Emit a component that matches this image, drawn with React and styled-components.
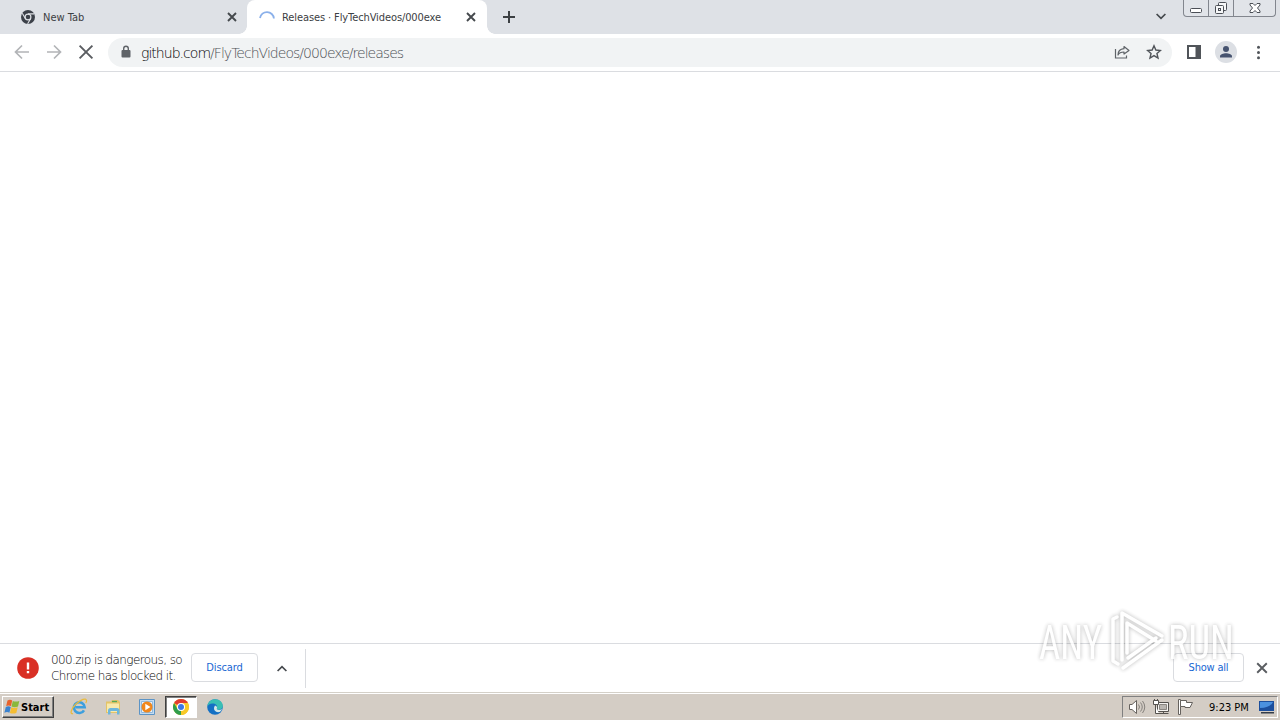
import React from "react";
import styled, { createGlobalStyle, css } from "styled-components";

const GlobalStyle = createGlobalStyle`
  * {
    box-sizing: border-box;
  }

  body {
    margin: 0;
    overflow: hidden;
    background: #fff;
    font-family: "DejaVu Sans Condensed", "DejaVu Sans", "Liberation Sans", sans-serif;
    font-stretch: condensed;
  }

  svg {
    display: block;
    flex: none;
  }
`;

const Screen = styled.div`
  position: relative;
  display: flex;
  flex-direction: column;
  width: 1280px;
  height: 720px;
  overflow: hidden;
`;

const Label = styled.span`
  white-space: pre;
  font-size: ${props => props.size || 11}px;
  letter-spacing: ${props => props.spacing || 0}px;
  color: ${props => props.color || "#3c4043"};
`;

/* the thin face of the address bar and the download notice */
const ThinLabel = styled(Label)`
  font-family: "DejaVu Sans Light", "DejaVu Sans", sans-serif;
  font-stretch: normal;
  font-weight: 200;
`;

/* Tab strip */

const TabStrip = styled.div`
  display: flex;
  height: 34px;
  background: #dee1e6;
`;

const Tab = styled.div`
  position: relative;
  display: flex;
  align-items: center;
  gap: ${props => props.gap}px;
  width: ${props => props.width}px;
  height: 34px;
  padding: 0 ${props => (props.active ? 11 : 10)}px 0 ${props => props.inset}px;

  ${props =>
    props.active &&
    css`
      background: #fff;
      border-radius: 8px 8px 0 0;

      &::before,
      &::after {
        content: "";
        position: absolute;
        bottom: 0;
        width: 8px;
        height: 8px;
      }

      &::before {
        left: -8px;
        background: radial-gradient(circle at 0 0, transparent 7.5px, #fff 8px);
      }

      &::after {
        right: -8px;
        background: radial-gradient(circle at 100% 0, transparent 7.5px, #fff 8px);
      }
    `}
`;

const TabTitle = styled(Label)`
  flex: 1;
`;

const NewTab = styled.div`
  padding: 11px 0 0 16px;
`;

const StripEnd = styled.div`
  display: flex;
  align-items: flex-start;
  margin-left: auto;
  padding-right: 4px;
`;

const TabSearch = styled.div`
  padding: 13px 17px 0 0;
`;

const Controls = styled.div`
  display: flex;
  width: 93px;
  height: 17px;
  border: 1px solid #82868e;
  border-top: 0;
  border-radius: 0 0 4px 4px;
  background: #e1e4e9;
`;

const Control = styled.div`
  display: flex;
  justify-content: center;
  width: ${props => props.width}px;
  padding-top: ${props => props.top}px;
  border-left: ${props => (props.divided ? "1px solid #82868e" : "0")};
`;

/* Toolbar */

const Toolbar = styled.div`
  display: flex;
  align-items: center;
  height: 38px;
  padding: 0 14px 1px;
  border-bottom: 1px solid #dadce0;
`;

const NavButtons = styled.div`
  display: flex;
  gap: 16px;
`;

const AddressBar = styled.div`
  display: flex;
  align-items: center;
  flex: 1;
  height: 29px;
  margin: 0 15px 0 14px;
  padding: 0 10px 0 12px;
  border-radius: 15px;
  background: #f1f3f4;
`;

const Url = styled(ThinLabel)`
  flex: 1;
  padding: 1px 0 0 9px;
`;

const Host = styled.span`
  color: #000;
`;

const BarIcons = styled.div`
  display: flex;
  gap: 16px;
`;

const ToolIcons = styled.div`
  display: flex;
  align-items: center;
  gap: 14px;
`;

const Page = styled.div`
  flex: 1;
  background: #fff;
`;

/* Download shelf */

const Shelf = styled.div`
  display: flex;
  align-items: center;
  height: 49px;
  padding: 0 12px 0 16px;
  border-top: 1px solid #dadce0;
`;

const Warning = styled.div`
  display: flex;
  flex: none;
  flex-direction: column;
  width: 151px;
  padding-left: 11px;
  line-height: 16px;
`;

const ShelfButton = styled.div`
  display: flex;
  align-items: center;
  justify-content: center;
  width: ${props => props.width}px;
  height: 29px;
  margin-bottom: 1px;
  padding-bottom: 1px;
  border: 1px solid #dadce0;
  border-radius: 4px;
`;

const ShelfChevron = styled.div`
  padding: 0 18px 0 19px;
`;

const Separator = styled.div`
  width: 1px;
  height: 39px;
  background: #dadce0;
`;

const ShelfEnd = styled.div`
  display: flex;
  align-items: center;
  gap: 12px;
  margin-left: auto;
`;

/* Taskbar */

const Taskbar = styled.div`
  display: flex;
  align-items: center;
  height: 28px;
  padding: 1px 2px 0;
  border-top: 1px solid #d4d0c8;
  background: #d4cdc5;
  box-shadow: inset 0 1px #fff;
`;

const StartButton = styled.div`
  display: flex;
  align-items: center;
  gap: 1px;
  width: 52px;
  height: 22px;
  padding-left: 1px;
  border: 1px solid;
  border-color: #fff #404040 #404040 #fff;
  box-shadow: inset -1px -1px #808080;
  font-weight: 700;
`;

const QuickLaunch = styled.div`
  display: flex;
  align-items: center;
  padding-left: 8px;
`;

const TaskItem = styled.div`
  display: flex;
  align-items: center;
  justify-content: center;
  width: ${props => (props.pressed ? 32 : 34)}px;
  height: 22px;
  margin: 0 ${props => (props.pressed ? 1 : 0)}px;

  ${props =>
    props.pressed &&
    css`
      background: #fff;
      border: 1px solid;
      border-color: #404040 #fff #fff #404040;
      box-shadow: inset 1px 1px #808080;
    `}
`;

const Tray = styled.div`
  display: flex;
  align-items: center;
  gap: 7px;
  width: 156px;
  height: 22px;
  margin-left: auto;
  padding-left: 5px;
  border: 1px solid;
  border-color: #808080 #fff #fff #808080;
`;

const Clock = styled(Label)`
  width: 42px;
  margin-left: 8px;
`;

const Watermark = styled.svg`
  position: absolute;
  left: 1032px;
  top: 602px;
  overflow: visible;
  opacity: 0.8;
  filter: drop-shadow(0 0 2px rgba(0, 0, 0, 0.35));
`;

const Cross = ({ size = 10, color = "#45494d", weight = 1.9 }) => (
  <svg width={size} height={size} viewBox="0 0 10 10" stroke={color} strokeWidth={weight}>
    <path d="M1 1l8 8M9 1L1 9" />
  </svg>
);

const Chevron = ({ up }) => (
  <svg width="10" height="7" viewBox="0 0 10 7" fill="none" stroke="#45494d" strokeWidth="1.7">
    <path d={up ? "M.6 6L5 1.6 9.400 6" : "M.6 1L5 5.400 9.400 1"} />
  </svg>
);

const Arrow = ({ flip }) => (
  <svg width="16" height="16" viewBox="0 0 16 16" fill="none" stroke="#b2b4b7" strokeWidth="1.700">
    <path d={flip ? "M1 8h13M8 1.500L14.500 8 8 14.500" : "M15 8H2M8 1.500L1.500 8 8 14.500"} />
  </svg>
);

const GreyChrome = () => (
  <svg width="14" height="14" viewBox="0 0 14 14">
    <circle cx="7" cy="7" r="7" fill="#3c4149" />
    <circle cx="7" cy="7" r="2.900" fill="none" stroke="#dee1e6" strokeWidth="1.200" />
    <path d="M7 3.900h6.200M4.300 8.500L1.300 3.300M9.700 8.500L6.600 13.800" stroke="#dee1e6" strokeWidth="1.100" />
  </svg>
);

const Spinner = () => (
  <svg width="16" height="16" viewBox="0 0 16 16" fill="none" stroke="#8ab0ea" strokeWidth="1.800">
    <path d="M1 9A7 7 0 0 1 14.900 9.500" />
  </svg>
);

const Lock = () => (
  <svg width="12" height="14" viewBox="0 0 12 14">
    <rect x="1.500" y="5" width="9" height="7.500" rx="1" fill="#5f6368" />
    <path d="M3.700 5.500V3.600a2.300 2.300 0 0 1 4.600 0v1.900" fill="none" stroke="#5f6368" strokeWidth="1.400" />
  </svg>
);

const Share = () => (
  <svg width="16" height="16" viewBox="0 0 16 16" fill="none" stroke="#5f6368" strokeWidth="1.200">
    <path d="M1.500 5v9h11v-2.500" />
    <path d="M10 2.500L15 6.500 10 10V8C7 8 5 9 4 11c0-4 2.500-6 6-6.300z" strokeLinejoin="round" />
  </svg>
);

const Star = () => (
  <svg width="16" height="16" viewBox="0 0 16 16" fill="none" stroke="#505459" strokeWidth="1.400">
    <path d="M8 1.800l1.850 4.250 4.600.4-3.500 3.050 1.050 4.500L8 11.600 4 14l1.050-4.500-3.500-3.050 4.600-.4z" />
  </svg>
);

const SidePanel = () => (
  <svg width="14" height="14" viewBox="0 0 14 14">
    <path d="M0 0h14v14H0zM2 2v10h6.500V2z" fill="#505459" fillRule="evenodd" />
  </svg>
);

const Avatar = () => (
  <svg width="22" height="22" viewBox="0 0 22 22">
    <circle cx="11" cy="11" r="11" fill="#dcdfe4" />
    <circle cx="11" cy="8" r="3" fill="#46536f" />
    <path d="M5 16.500v-1.300c0-2 3.500-3 6-3s6 1 6 3v1.300z" fill="#46536f" />
  </svg>
);

const Dots = () => (
  <svg width="15" height="16" viewBox="0 0 15 16" fill="#505459">
    <circle cx="7.500" cy="3.300" r="1.500" />
    <circle cx="7.500" cy="8.500" r="1.500" />
    <circle cx="7.500" cy="13.700" r="1.500" />
  </svg>
);

const Alert = () => (
  <svg width="24" height="24" viewBox="0 0 24 24">
    <circle cx="12" cy="12" r="10.800" fill="#d93025" />
    <path d="M12 6.500v7M12 15v2.300" stroke="#fff" strokeWidth="2.400" />
  </svg>
);

const WindowsFlag = () => (
  <svg width="16" height="16" viewBox="0 0 16 16">
    <path d="M3.500 1.500q2.500-1.400 4.700 0L7 7.100q-2.500-1.300-4.800 0z" fill="#e8622c" />
    <path d="M8.800 1.900q3 1.300 6.500 0L14 7.500q-3.500 1.300-6.500 0z" fill="#8ab83c" />
    <path d="M1.800 8q2.600-1.300 5 0l-1.400 5.700q-2.300-1.300-5 0z" fill="#3a82cf" />
    <path d="M7.300 8.300q3 1.300 6.400 0l-1.400 5.600q-3.500 1.300-6.400 0z" fill="#f5bd32" />
  </svg>
);

const Explorer = () => (
  <svg width="18" height="18" viewBox="0 0 18 18" fill="none">
    <path d="M14 12.300a5.400 5.400 0 1 1 .7-3H5.500" stroke="#3d9fde" strokeWidth="2.600" />
    <path d="M3 15.500C-.5 17 1 10.500 6 6S16-.5 16.500 2.500q.2 1-.7 2.500" stroke="#e9bb3d" strokeWidth="1.300" />
  </svg>
);

const Folder = () => (
  <svg width="18" height="18" viewBox="0 0 18 18">
    <path d="M2 3.500h5l1-1.500h6L16 4v11H2z" fill="#e3c468" />
    <path d="M3 5.500h12v8.500H3z" fill="#f8e9ad" />
    <path d="M8 3.500h5" stroke="#55a85a" strokeWidth="1.300" />
    <path d="M4 16.500v-4q0-2.500 2.500-2.500h6.500q2.500 0 2.500 2.500v4H13V13H6.500v3.500z" fill="#6db6dc" />
  </svg>
);

const MediaPlayer = () => (
  <svg width="16" height="16" viewBox="0 0 16 16">
    <path d="M.5.500h15v15H.5z" fill="#c4dcf1" stroke="#5c94c6" />
    <path d="M2.500 2.500h11v11h-11z" fill="#eaf3fb" stroke="#8fb8dc" />
    <circle cx="8" cy="8" r="5.500" fill="#f0871c" />
    <path d="M6.300 4.700v6.600L11.500 8z" fill="#fff" />
  </svg>
);

const Chrome = () => (
  <svg width="16" height="16" viewBox="0 0 16 16">
    <circle cx="8" cy="8" r="8" fill="#f7c928" />
    <path d="M8 8L1.070 4A8 8 0 0 1 14.930 4z" fill="#e03c31" />
    <path d="M8 8v8A8 8 0 0 1 1.070 4L4.500 10z" fill="#2f9d4c" />
    <path d="M8 4h6.930A8 8 0 0 1 8 16l3.500-6z" fill="#f7c928" />
    <circle cx="8" cy="8" r="4" fill="#fff" />
    <circle cx="8" cy="8" r="3" fill="#3b78e7" />
  </svg>
);

const Edge = () => (
  <svg width="16" height="16" viewBox="0 0 16 16">
    <circle cx="8" cy="8" r="7.800" fill="#1470c4" />
    <path d="M.3 7.500C1 2.500 4.500.200 8 .200c5 0 8 3.500 7.800 6.800-.2 2.500-2 3.700-4.300 3.700-2 0-2.400-.8-1.700-1.700C11 6.500 8.500 4.500 5.500 4.500S1 6 .3 7.500z" fill="#39bfb4" />
    <path d="M10 9c-.8 1 0 1.900 2 1.900 1 0 2-.3 3-1-.4 1.300-1.500 2.600-2.300 3.100C8 14 5.500 10 8 6.500c1.500.3 2.300 1.500 2 2.500z" fill="#d4e7e8" />
  </svg>
);

const Speaker = () => (
  <svg width="18" height="16" viewBox="0 0 18 16" fill="none" stroke="#66625e">
    <path d="M1.500 5.500H4L8.500 1.500v13L4 10.500H1.500z" fill="#fff" />
    <path d="M10.500 5.500q2 2.500 0 5M12.500 3.500q3.500 4.500 0 9M14.500 2q4.500 6 0 12" stroke="#85817c" />
  </svg>
);

const Network = () => (
  <svg width="17" height="16" viewBox="0 0 17 16" fill="none" stroke="#55524e">
    <path d="M4.500 3.500h11v9h-11z" fill="#f5f3f0" />
    <path d="M6.500 5.500h7v5h-7z" fill="#bab6b1" stroke="#8b8782" />
    <path d="M6 14.500h9.500M10.500 13v1M.5 1.500h5v4h-5zM1.500 0v2M4.500 0v2M2.500 6v8.500H6" fill="#fff" />
  </svg>
);

const Flag = () => (
  <svg width="17" height="16" viewBox="0 0 17 16" stroke="#66625e">
    <path d="M1.500.500h2v15h-2z" fill="#fff" />
    <path d="M3.500 1.500h6v2h6l-2.500 5h-5v-1H3.500z" fill="#fff" strokeLinejoin="round" />
  </svg>
);

const Desktop = () => (
  <svg width="17" height="14" viewBox="0 0 17 14">
    <path d="M1 1h15v10H1z" fill="#1c4f9d" />
    <path d="M2 2h13q-3 6-13 6z" fill="#4b91df" />
    <path d="M3 12h13v1.500H3z" fill="#343c49" />
  </svg>
);

export default function App() {
  return (
    <Screen>
      <GlobalStyle />
      <TabStrip>
        <Tab width={247} inset={21} gap={8}>
          <GreyChrome />
          <TabTitle>New Tab</TabTitle>
          <Cross />
        </Tab>
        <Tab active width={240} inset={12} gap={7}>
          <Spinner />
          <TabTitle spacing={-0.1}>Releases · FlyTechVideos/000exe</TabTitle>
          <Cross />
        </Tab>
        <NewTab>
          <svg width="12" height="12" viewBox="0 0 12 12" stroke="#3c4043" strokeWidth="2">
            <path d="M6 0v12M0 6h12" />
          </svg>
        </NewTab>
        <StripEnd>
          <TabSearch>
            <Chevron />
          </TabSearch>
          <Controls>
            <Control width={24} top={8}>
              <svg width="12" height="5" viewBox="0 0 12 5">
                <rect x=".5" y=".5" width="11" height="4" rx="1" fill="#fff" stroke="#4b4f56" />
              </svg>
            </Control>
            <Control width={25} top={1} divided>
              <svg width="14" height="14" viewBox="0 0 14 14" fill="#f6f7f8" stroke="#4b4f56">
                <rect x="4.500" y="1.500" width="8" height="8" rx="1" />
                <rect x="1.500" y="4.500" width="8" height="8" rx="1" />
                <rect x="4.500" y="7.500" width="2" height="2" />
              </svg>
            </Control>
            <Control width={42} top={3} divided>
              <svg width="12" height="10" viewBox="0 0 12 10" fill="#fff" stroke="#4b4f56">
                <path d="M1 .5h3l2 2L8 .5h3v1.500L8.500 5 11 8v1.500H8l-2-2-2 2H1V8l2.500-3L1 2z" />
              </svg>
            </Control>
          </Controls>
        </StripEnd>
      </TabStrip>
      <Toolbar>
        <NavButtons>
          <Arrow />
          <Arrow flip />
          <Cross size={16} color="#5a5d61" weight={1.2} />
        </NavButtons>
        <AddressBar>
          <Lock />
          <Url size={14} spacing={-0.97} color="#4c5055">
            <Host>github.com</Host>/FlyTechVideos/000exe/releases
          </Url>
          <BarIcons>
            <Share />
            <Star />
          </BarIcons>
        </AddressBar>
        <ToolIcons>
          <SidePanel />
          <Avatar />
          <Dots />
        </ToolIcons>
      </Toolbar>
      <Page />
      <Shelf>
        <Alert />
        <Warning>
          <ThinLabel size={12} spacing={-0.6} color="#000">
            000.zip is dangerous, so
          </ThinLabel>
          <ThinLabel size={12} spacing={-0.6} color="#000">
            Chrome has blocked it.
          </ThinLabel>
        </Warning>
        <ShelfButton width={67}>
          <Label spacing={-0.1} color="#1967d2">
            Discard
          </Label>
        </ShelfButton>
        <ShelfChevron>
          <Chevron up />
        </ShelfChevron>
        <Separator />
        <ShelfEnd>
          <ShelfButton width={71}>
            <Label spacing={-0.2} color="#1967d2">
              Show all
            </Label>
          </ShelfButton>
          <Cross size={12} color="#5a5d61" weight={1.6} />
        </ShelfEnd>
      </Shelf>
      <Taskbar>
        <StartButton>
          <WindowsFlag />
          <Label color="#000">Start</Label>
        </StartButton>
        <QuickLaunch>
          <TaskItem>
            <Explorer />
          </TaskItem>
          <TaskItem>
            <Folder />
          </TaskItem>
          <TaskItem>
            <MediaPlayer />
          </TaskItem>
          <TaskItem pressed>
            <Chrome />
          </TaskItem>
          <TaskItem>
            <Edge />
          </TaskItem>
        </QuickLaunch>
        <Tray>
          <Speaker />
          <Network />
          <Flag />
          <Clock color="#000">9:23 PM</Clock>
          <Desktop />
        </Tray>
      </Taskbar>
      <Watermark width="208" height="76" viewBox="0 0 208 76" fill="none" stroke="#fff">
        <g fill="#fff" stroke="none" fontFamily="Roboto" fontSize="49" fontWeight="400">
          <text x="7" y="57" textLength="63" lengthAdjust="spacingAndGlyphs">
            ANY
          </text>
          <text x="136" y="57" textLength="66" lengthAdjust="spacingAndGlyphs">
            RUN
          </text>
        </g>
        <g strokeWidth="3.500" strokeLinejoin="round" strokeLinecap="round">
          <path d="M85 15l-4 2v42l5 3" />
          <path d="M95 51V21l29 18M90 58V11l40 23" />
          <path d="M130 38L91 66M124 36L96 56" />
        </g>
      </Watermark>
    </Screen>
  );
}
